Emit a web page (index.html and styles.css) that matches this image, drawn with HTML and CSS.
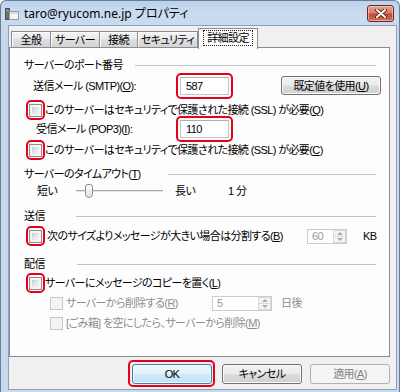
FILE: index.html
```html
<!DOCTYPE html>
<html lang="ja">
<head>
<meta charset="utf-8">
<title>taro@ryucom.ne.jp プロパティ</title>
<link rel="stylesheet" href="styles.css">
</head>
<body>
<div class="window">
  <div class="titlebar">
    <svg class="app-icon" width="14" height="14" viewBox="0 0 14 14">
      <rect x="0.5" y="1.5" width="4" height="11" fill="#707070" stroke="#505050" stroke-width="1"/>
      <rect x="1.5" y="3" width="2" height="1" fill="#bdbdbd"/>
      <rect x="4.5" y="4.5" width="9" height="8" fill="#f4f4f4" stroke="#9a9a9a" stroke-width="1"/>
      <rect x="5" y="5" width="8" height="2" fill="#dcdcdc"/>
    </svg>
    <span class="title">taro@ryucom.ne.jp プロパティ</span>
    <div class="close">
      <svg width="12" height="9" viewBox="0 0 12 9">
        <path d="M2 1 L10 8 M10 1 L2 8" stroke="#3a1410" stroke-width="3.6" stroke-linecap="round"/>
        <path d="M2 1 L10 8 M10 1 L2 8" stroke="#ffffff" stroke-width="2" stroke-linecap="round"/>
      </svg>
    </div>
  </div>
  <div class="client">
    <div class="tabs">
      <div class="tab t-general">全般</div>
      <div class="tab t-server">サーバー</div>
      <div class="tab t-conn">接続</div>
      <div class="tab t-sec">セキュリティ</div>
      <div class="tab t-adv selected"><span class="focus">詳細設定</span></div>
    </div>
    <div class="panel">
      <div class="grp grp-port"><span class="grp-label">サーバーのポート番号</span><span class="grp-line"></span></div>
      <div class="row port-row row-smtp">
        <span class="plabel">送信メール (SMTP)(<u>O</u>):</span>
        <span class="edit marked">587</span>
        <span class="btn btn-default-val">既定値を使用(<u>U</u>)</span>
      </div>
      <div class="row chk-row row-ssl1">
        <span class="chk marked"></span>
        <span class="clabel">このサーバーはセキュリティで保護された接続 (SSL) が必要(<u>Q</u>)</span>
      </div>
      <div class="row port-row row-pop">
        <span class="plabel plabel-pop">受信メール (POP3)(<u>I</u>):</span>
        <span class="edit marked">110</span>
      </div>
      <div class="row chk-row row-ssl2">
        <span class="chk marked"></span>
        <span class="clabel">このサーバーはセキュリティで保護された接続 (SSL) が必要(<u>C</u>)</span>
      </div>
      <div class="grp grp-timeout"><span class="grp-label">サーバーのタイムアウト(<u>T</u>)</span><span class="grp-line"></span></div>
      <div class="row slider-row">
        <span class="s-short">短い</span>
        <span class="slider"><span class="thumb"></span></span>
        <span class="s-long">長い</span>
        <span class="s-val">1 分</span>
      </div>
      <div class="grp grp-send"><span class="grp-label">送信</span><span class="grp-line"></span></div>
      <div class="row chk-row row-split">
        <span class="chk marked"></span>
        <span class="clabel clabel-wide">次のサイズよりメッセージが大きい場合は分割する(<u>B</u>)</span>
        <span class="spin spin-kb"><span class="spin-val">60</span><span class="spin-btns"><span class="up"></span><span class="down"></span></span></span>
        <span class="unit unit-kb">KB</span>
      </div>
      <div class="grp grp-deliver"><span class="grp-label">配信</span><span class="grp-line"></span></div>
      <div class="row chk-row row-copy">
        <span class="chk marked"></span>
        <span class="clabel">サーバーにメッセージのコピーを置く(<u>L</u>)</span>
      </div>
      <div class="row sub-row row-remove">
        <span class="chk disabled"></span>
        <span class="clabel dis-label sub-label">サーバーから削除する(<u>R</u>)</span>
        <span class="spin spin-days"><span class="spin-val">5</span><span class="spin-btns"><span class="up"></span><span class="down"></span></span></span>
        <span class="unit dis-label unit-days">日後</span>
      </div>
      <div class="row sub-row row-trash">
        <span class="chk disabled"></span>
        <span class="clabel dis-label">[ごみ箱] を空にしたら、サーバーから削除(<u>M</u>)</span>
      </div>
    </div>
    <div class="buttons">
      <span class="btn dlg-btn btn-ok marked">OK</span>
      <span class="btn dlg-btn btn-cancel">キャンセル</span>
      <span class="btn dlg-btn btn-apply disabled">適用(<u>A</u>)</span>
    </div>
  </div>
</div>
</body>
</html>
```

FILE: styles.css
```css
html, body {
  margin: 0;
  padding: 0;
}
body {
  width: 400px;
  height: 392px;
  overflow: hidden;
  font-family: "Liberation Sans", "Noto Sans CJK JP", sans-serif;
  font-size: 11px;
  letter-spacing: -0.6px;
  line-height: 16px;
  color: #000;
  font-feature-settings: "palt";
  background: #fff;
}
u { text-decoration: underline; text-underline-offset: 1px; }

.window {
  box-sizing: border-box;
  width: 400px;
  height: 392px;
  display: flex;
  flex-direction: column;
  border: 1px solid #6d7d92;
  border-bottom: none;
  border-radius: 6px 6px 0 0;
  background: linear-gradient(to bottom, #bcd2eb 0px, #cadcf0 14px, #c3d7ed 40px, #c6d9ee 100%);
}

/* title bar */
.titlebar {
  height: 24px;
  flex: none;
  display: flex;
  align-items: center;
  padding-left: 4px;
}
.app-icon { flex: none; margin-top: 2px; }
.title {
  margin-left: 5px;
  font-family: "Noto Sans", "Noto Sans CJK JP", sans-serif;
  font-size: 12px;
  letter-spacing: 0;
  color: #000;
  margin-top: 1px;
  white-space: nowrap;
}
.close {
  margin-left: auto;
  margin-right: 5px;
  align-self: flex-start;
  margin-top: 4px;
  width: 25px;
  height: 15px;
  border: 1px solid #6a2a22;
  border-radius: 3px;
  background: linear-gradient(to bottom, #e3a293 0%, #d67e6c 45%, #c24a34 55%, #d2705a 100%);
  box-shadow: inset 0 0 0 1px rgba(255,220,210,0.55);
  display: flex;
  align-items: center;
  justify-content: center;
}

/* client */
.client {
  flex: 1;
  margin: 0 2px 2px 7px;
  border: 1px solid #8ea1b8;
  background: #f0f0f0;
  display: flex;
  flex-direction: column;
  padding-top: 2px;
}

.tabs {
  height: 19px;
  display: flex;
  align-items: flex-end;
  padding-left: 2px;
  flex: none;
}
.tab {
  box-sizing: border-box;
  height: 16px;
  border: 1px solid #898c95;
  border-bottom: none;
  background: linear-gradient(to bottom, #f3f3f3 0%, #ebebeb 50%, #dedede 50%, #d4d4d4 100%);
  box-shadow: inset 1px 1px 0 #fcfcfc;
  display: flex;
  align-items: center;
  justify-content: center;
  line-height: 14px;
  white-space: nowrap;
}
.tab + .tab { border-left: none; }
.t-general { width: 40px; }
.t-server { width: 49px; }
.t-conn { width: 38px; }
.t-sec { width: 60px; }
.t-adv { width: 60px; }
.tab.selected {
  height: 21px;
  margin-bottom: -2px;
  background: #fdfdfd;
  box-shadow: none;
  border-left: 1px solid #898c95;
  position: relative;
  z-index: 1;
  align-items: flex-start;
  padding-top: 2px;
}
.focus {
  outline: 1px dotted #222;
  outline-offset: 0;
  padding: 0 3px;
  line-height: 14px;
}

.panel {
  box-sizing: border-box;
  height: 310px;
  margin-right: 6px;
  border: 1px solid #898c95;
  background: #fdfdfd;
  flex: none;
  display: flex;
  flex-direction: column;
}

.row, .grp {
  height: 16px;
  display: flex;
  align-items: center;
  flex: none;
  white-space: nowrap;
}
.grp {
  padding-left: 14px;
  padding-right: 13px;
}
.grp-label { flex: none; }
.grp-line {
  flex: 1;
  height: 0;
  border-top: 1px solid #c3c3c3;
}
.grp-port { margin-top: 9px; }
.grp-port .grp-label { width: 111px; }
.grp-timeout { margin-top: 8px; }
.grp-timeout .grp-label { width: 144px; }
.grp-send { margin-top: 9px; }
.grp-send .grp-label { width: 52px; }
.grp-deliver { margin-top: 12px; }
.grp-deliver .grp-label { width: 53px; }

/* port rows */
.port-row {
  height: 19px;
  padding-left: 23px;
  padding-right: 8px;
}
.row-smtp { margin-top: 3px; }
.row-pop { margin-top: 1px; }
.plabel { width: 147px; flex: none; }
.plabel-pop { width: 144px; padding-left: 3px; }
.edit {
  box-sizing: border-box;
  width: 49px;
  height: 18px;
  border: 1px solid #c2c6cc;
  border-top-color: #abadb3;
  background: #fff;
  padding-left: 5px;
  line-height: 16px;
  flex: none;
}
.marked { position: relative; }
.marked::after {
  content: "";
  position: absolute;
  left: -4px;
  right: -4px;
  top: -4px;
  bottom: -4px;
  border: 2px solid #e5001b;
  border-radius: 5px;
  pointer-events: none;
}
.edit.marked::after { left: -5px; right: -5px; top: -5px; bottom: -5px; }

.btn {
  box-sizing: border-box;
  display: flex;
  align-items: center;
  justify-content: center;
  border: 1px solid #707070;
  border-radius: 3px;
  background: linear-gradient(to bottom, #f2f2f2 0%, #ebebeb 48%, #dddddd 52%, #cfcfcf 100%);
  box-shadow: inset 0 0 0 1px #fbfbfb;
  flex: none;
  line-height: 14px;
  white-space: nowrap;
}
.btn-default-val {
  width: 100px;
  height: 19px;
  margin-left: auto;
}

/* checkbox rows */
.chk-row { padding-left: 19px; }
.row-ssl1 { margin-top: 7px; }
.row-ssl2 { margin-top: 4px; }
.row-split { margin-top: 4px; }
.row-copy { margin-top: 3px; }
.chk {
  box-sizing: border-box;
  width: 13px;
  height: 13px;
  flex: none;
  border: 1px solid #8f8f8f;
  background: #fff;
  box-shadow: inset 0 0 0 2px #f4f4f4;
  background-image: linear-gradient(135deg, #c6c9cf 0%, #e9eaec 60%, #f6f6f6 100%);
  background-origin: content-box;
  padding: 2px;
  background-clip: content-box;
}
.chk.marked::after { left: -4px; right: -4px; top: -5px; bottom: -4px; }
.chk.disabled {
  border-color: #c7c7c7;
  background-image: none;
  background: #f4f4f4;
  box-shadow: none;
}
.clabel { margin-left: 3px; }
.clabel-wide { flex: 1; min-width: 0; margin-left: 5px; overflow: hidden; }

/* slider */
.slider-row {
  margin-top: 1px;
  padding-left: 27px;
}
.s-short { width: 39px; flex: none; }
.slider {
  width: 87px;
  height: 16px;
  flex: none;
  display: flex;
  align-items: center;
  background:
    linear-gradient(#a9a9a9, #a9a9a9) 0 7px / 100% 1px no-repeat,
    linear-gradient(#e4e4e4, #e4e4e4) 0 8px / 100% 1px no-repeat;
}
.thumb {
  box-sizing: border-box;
  width: 8px;
  height: 14px;
  margin-left: 9px;
  border: 1px solid #8d8d8d;
  border-radius: 3px 3px 4px 4px;
  background: linear-gradient(to bottom, #fbfbfb, #e4e4e4);
}
.s-long { width: 53px; margin-left: 12px; flex: none; }

/* spins */
.spin {
  box-sizing: border-box;
  height: 15px;
  display: flex;
  border: 1px solid #c9ccd1;
  background: #fff;
  flex: none;
}
.spin-val {
  flex: 1;
  color: #9a9a9a;
  padding-left: 4px;
  line-height: 13px;
}
.spin-btns {
  width: 13px;
  display: flex;
  flex-direction: column;
}
.spin-btns .up, .spin-btns .down {
  flex: 1;
  box-sizing: border-box;
  border: 1px solid #d9d9d9;
  background: #f4f4f4;
  display: flex;
  align-items: center;
  justify-content: center;
}
.spin-btns .down { border-top: none; }
.spin-btns .up::before {
  content: "";
  border-left: 3px solid transparent;
  border-right: 3px solid transparent;
  border-bottom: 3px solid #a8a8a8;
}
.spin-btns .down::before {
  content: "";
  border-left: 3px solid transparent;
  border-right: 3px solid transparent;
  border-top: 3px solid #a8a8a8;
}
.spin-kb { width: 40px; margin-right: 16px; }
.unit-kb { width: 26px; flex: none; }

.sub-row { padding-left: 40px; margin-top: 4px; }
.dis-label { color: #8d8d8d; }
.sub-label { width: 146px; flex: none; }
.spin-days { width: 60px; }
.unit-days { margin-left: 9px; }

/* dialog buttons */
.buttons {
  display: flex;
  justify-content: flex-end;
  margin-top: 7px;
  padding-right: 6px;
  flex: none;
}
.dlg-btn { width: 80px; height: 20px; }
.btn-ok {
  border-color: #3c7fb1;
  background: linear-gradient(to bottom, #eef7fd 0%, #e3f2fc 48%, #cfe8f8 52%, #c3e2f6 100%);
  box-shadow: inset 0 0 0 1px #f4fbff;
}
.btn-ok.marked::after { left: -5px; right: -4px; top: -5px; bottom: -4px; }
.btn-cancel { margin-left: 10px; }
.btn-apply { margin-left: 8px; }
.btn.disabled {
  border-color: #adb2b5;
  background: #f4f4f4;
  box-shadow: none;
  color: #838383;
}
```
